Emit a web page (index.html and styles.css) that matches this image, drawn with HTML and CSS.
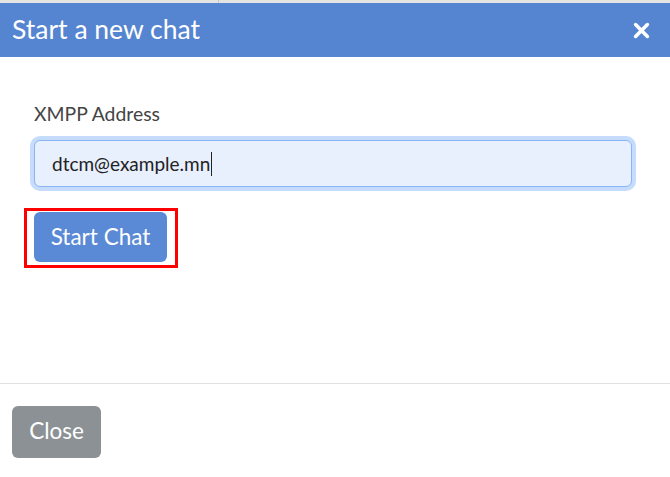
FILE: index.html
```html
<!DOCTYPE html>
<html>
<head>
<meta charset="utf-8">
<link rel="stylesheet" href="styles.css">
</head>
<body>
<div class="topstrip"><div class="strip-left"></div><div class="strip-right"></div></div>
<div class="modal">
  <div class="modal-header">
    <h1 class="title">Start a new chat</h1>
    <button class="close-x" aria-label="Close">
      <svg width="17" height="17" viewBox="0 0 17 17"><path d="M2.6 2.6 L14.4 14.4 M14.4 2.6 L2.6 14.4" stroke="#fff" stroke-width="3.6" stroke-linecap="round"/></svg>
    </button>
  </div>
  <div class="modal-body">
    <label class="label">XMPP Address</label>
    <div class="input"><span class="value">dtcm@example.mn</span><span class="caret"></span></div>
    <div class="highlight"><button class="btn-primary">Start Chat</button></div>
  </div>
  <div class="modal-footer">
    <button class="btn-secondary">Close</button>
  </div>
</div>
</body>
</html>
```
FILE: styles.css
```css
html, body { margin: 0; padding: 0; background: #fff; }
body { width: 670px; height: 477px; overflow: hidden; font-family: Lato, "Noto Sans", sans-serif; }
.topstrip { display: flex; height: 3px; background: #e4e4e4; }
.strip-left { width: 218px; border-right: 1px solid #c8c8c8; }
.strip-right { flex: 1; }
.modal-header { height: 54px; background: #5585d0; display: flex; align-items: center; justify-content: space-between; padding: 0 20px 0 12px; }
.title { margin: 0 0 2px; color: #fff; font-weight: 400; font-size: 26.5px; line-height: 1; }
.close-x { background: none; border: 0; padding: 0; display: flex; }
.modal-body { padding: 45px 38px 0 34px; height: 281px; display: flex; flex-direction: column; align-items: flex-start; border-bottom: 1px solid #e2e2e2; }
.label { font-size: 19.4px; color: #444; line-height: 23px; margin-bottom: 15px; }
.input { width: 100%; box-sizing: border-box; height: 47px; background: #e8f0fe; border: 1px solid #8ab4f8; border-radius: 6px; box-shadow: 0 0 0 4px #c5dcfd; display: flex; align-items: center; padding-left: 17px; font-size: 19px; color: #222; }
.caret { display: inline-block; width: 1px; height: 24px; background: #222; margin-left: 1px; }
.highlight { border: 3px solid #f00; padding: 1px 8px 3px 7px; margin: 21px 0 0 -10px; display: flex; }
.btn-primary { width: 133px; height: 50px; border: 0; border-radius: 6px; background: #5a89d5; color: #fff; font-family: Lato, sans-serif; font-size: 22.5px; padding: 0 0 2px; }
.modal-footer { padding: 22px 12px; }
.btn-secondary { width: 89px; height: 52px; border: 0; border-radius: 6px; background: #8c9195; color: #fff; font-family: Lato, sans-serif; font-size: 22.5px; padding: 0 0 4px; }
```
